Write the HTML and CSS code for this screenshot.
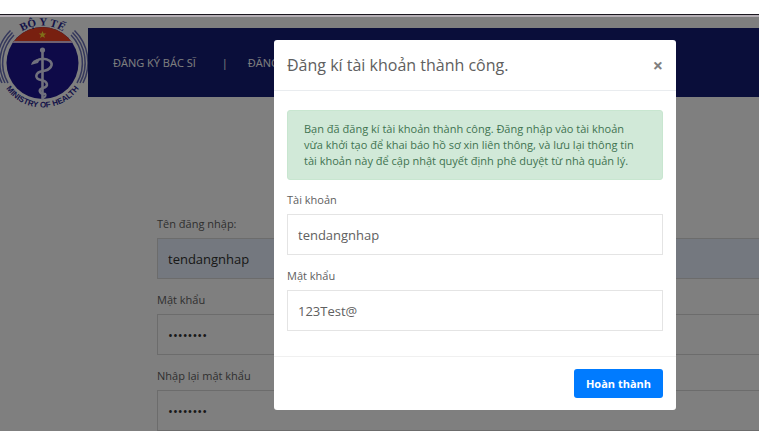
FILE: index.html
```html
<!DOCTYPE html>
<html lang="vi">
<head>
    <meta charset="UTF-8">
    <meta name="viewport" content="width=device-width, initial-scale=1.0">
    <title>Đăng ký tài khoản</title>
    <link rel="stylesheet" href="styles.css">
</head>
<body>

    <div class="top-strip"></div>

    <div class="page">
        <header class="header">
            <svg class="logo" viewBox="0 0 88 94" role="img" aria-label="Bộ Y tế">
                <defs>
                    <path id="arcTop" d="M5 46 A37.500 37.500 0 0 1 80 46"/>
                    <path id="arcBottom" d="M-2 46 A44.500 44.500 0 0 0 87 46"/>
                    <clipPath id="disc"><circle cx="42.500" cy="46" r="36"/></clipPath>
                </defs>
                <!-- vòng cung hai bên -->
                <g fill="none" stroke="#6a70b8" stroke-width="1.500">
                    <path d="M14 18 A40 40 0 0 0 8 66"/>
                    <path d="M12.500 15.500 A42.500 42.500 0 0 0 5 66"/>
                    <path d="M10.500 13.500 A45 45 0 0 0 2 66"/>
                    <path d="M71 18 A40 40 0 0 1 77 66"/>
                    <path d="M72.500 15.500 A42.500 42.500 0 0 1 80 66"/>
                    <path d="M74.500 13.500 A45 45 0 0 1 83 66"/>
                </g>
                <g clip-path="url(#disc)">
                    <rect width="88" height="94" fill="#1c1490"/>
                    <rect width="88" height="25" fill="#f04020"/>
                    <rect y="24" width="88" height="2" fill="#e0c0e0"/>
                </g>
                <path fill="#ffe030" d="M42.500 14 L43.500 16.600 H46.300 L44.100 18.300 L44.900 21 L42.500 19.400 L40.100 21 L40.900 18.300 L38.700 16.600 H41.500Z"/>
                <!-- gậy và rắn -->
                <g fill="none" stroke="#e0e0f8" stroke-linecap="round">
                    <path stroke-width="2.600" d="M42.500 33 V82"/>
                    <path stroke-width="2.600" d="M36 44 C40 41 46 41 50 44 C54 48 50 53 43 54 C35 55 34 62 41 63 C48 64 49 70 43 71 C38 72 39 77 45 77"/>
                    <path stroke-width="2" d="M45 77 Q47 79 43 81"/>
                </g>
                <circle cx="42.500" cy="33" r="2.600" fill="#e0e0f8"/>
                <path fill="#e0e0f8" d="M31 48 Q32 42 40 42 L38 46 Q34 47 31 48Z"/>
                <text class="logo-name"><textPath href="#arcTop" startOffset="50%" text-anchor="middle">BỘ Y TẾ</textPath></text>
                <text class="logo-sub"><textPath href="#arcBottom" startOffset="50%" text-anchor="middle">MINISTRY OF HEALTH</textPath></text>
            </svg>
            <nav class="navbar">
                <a href="#">ĐĂNG KÝ BÁC SĨ</a>
                <span>|</span>
                <a href="#">ĐĂNG</a>
            </nav>
        </header>

        <form class="register">
            <div class="field">
                <label for="username">Tên đăng nhập:</label>
                <input type="text" id="username" class="filled" value="tendangnhap">
            </div>
            <div class="field">
                <label for="password">Mật khẩu</label>
                <input type="password" id="password" value="12345678">
            </div>
            <div class="field">
                <label for="repassword">Nhập lại mật khẩu</label>
                <input type="password" id="repassword" value="12345678">
            </div>
        </form>

        <div class="backdrop">
            <div class="modal" role="dialog" aria-labelledby="modalTitle">
                <div class="modal-header">
                    <h5 id="modalTitle">Đăng kí tài khoản thành công.</h5>
                    <button type="button" class="close" aria-label="Đóng">×</button>
                </div>
                <div class="modal-body">
                    <div class="alert">Bạn đã đăng kí tài khoản thành công. Đăng nhập vào tài khoản vừa khởi tạo để khai báo hồ sơ xin liên thông, và lưu lại thông tin tài khoản này để cập nhật quyết định phê duyệt từ nhà quản lý.</div>
                    <div class="field">
                        <label for="account">Tài khoản</label>
                        <input type="text" id="account" value="tendangnhap">
                    </div>
                    <div class="field">
                        <label for="accountPass">Mật khẩu</label>
                        <input type="text" id="accountPass" value="123Test@">
                    </div>
                </div>
                <div class="modal-footer">
                    <button type="button" class="btn">Hoàn thành</button>
                </div>
            </div>
        </div>
    </div>

</body>
</html>
```

FILE: styles.css
```css
* {
    box-sizing: border-box;
}
body {
    margin: 0;
    min-height: 100vh;
    display: flex;
    flex-direction: column;
    font-family: "Open Sans", "Noto Sans", sans-serif;
    font-size: 11px;
    line-height: 16px;
    color: #606060;
    background-color: #fff;
}
.top-strip {
    height: 15px;
    border-bottom: 1px solid #1c1820;
}
.page {
    position: relative;
    flex: 1;
    overflow: hidden;
    border-top: 2px solid #b4aeb4;
}
.header {
    display: flex;
    align-items: flex-start;
}
.logo {
    width: 88px;
    height: 94px;
    flex: none;
    overflow: visible;
}
.logo-name {
    font-family: "Liberation Serif", serif;
    font-size: 11px;
    font-weight: bold;
    fill: #2a2890;
}
.logo-sub {
    font-family: "Liberation Sans", sans-serif;
    font-size: 8px;
    font-weight: bold;
    fill: #2a2890;
}
.navbar {
    flex: 1;
    display: flex;
    align-items: center;
    gap: 20px;
    height: 69px;
    margin-top: 11px;
    padding-left: 25px;
    background-color: #141c74;
    color: #fff;
    white-space: nowrap;
}
.navbar a {
    color: #fff;
    text-decoration: none;
}
.navbar span {
    padding-left: 6px;
}

/* Form đăng ký */
.register {
    margin: 105px 0 0 157px;
}
.field {
    margin-bottom: 13px;
}
.field label {
    display: block;
    margin-bottom: 6px;
}
.field input {
    display: block;
    width: 100%;
    height: 41px;
    padding: 0 10px;
    border: 1px solid #e4e4e4;
    background-color: #fff;
    font-family: inherit;
    font-size: 13px;
    color: #606060;
}
.register input {
    border-right: 0;
    border-color: #d8d8d8;
    color: #303030;
}
.register input.filled {
    background-color: #e8f0fe;
}

/* Modal */
.backdrop {
    position: absolute;
    inset: 0;
    padding: 23px 0 0 274px;
    background-color: rgba(0, 0, 0, 0.5);
}
.modal {
    max-width: 402px;
    background-color: #fff;
    border-radius: 3px;
}
.modal-header {
    display: flex;
    justify-content: space-between;
    align-items: center;
    height: 51px;
    padding: 0 13px;
    border-bottom: 1px solid #e9ecef;
}
.modal-header h5 {
    margin: 0;
    font-size: 16px;
    font-weight: normal;
    line-height: 24px;
}
.close {
    padding: 0;
    border: 0;
    background: none;
    font-family: inherit;
    font-size: 18px;
    font-weight: bold;
    line-height: 24px;
    color: #808080;
    cursor: pointer;
}
.modal-body {
    padding: 19px 13px 12px;
}
.alert {
    margin-bottom: 12px;
    padding: 10px 22px 10px 16px;
    border: 1px solid #c8e6d0;
    border-radius: 3px;
    background-color: #d1e9d8;
    color: #3f7350;
}
.modal-footer {
    display: flex;
    justify-content: flex-end;
    padding: 12px 13px;
    border-top: 1px solid #f0f0f0;
}
.btn {
    height: 29px;
    padding: 0 12px;
    border: 0;
    border-radius: 3px;
    background-color: #007bff;
    font-family: inherit;
    font-size: 11px;
    font-weight: bold;
    color: #fff;
    cursor: pointer;
}
```
